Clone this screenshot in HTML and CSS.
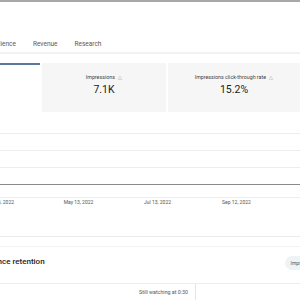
FILE: index.html
```html
<!DOCTYPE html>
<html lang="en">
<head>
    <meta charset="UTF-8">
    <title>Channel analytics</title>
    <link rel="stylesheet" href="styles.css">
</head>
<body>
    <!-- Barre du haut -->
    <div class="topbar"></div>

    <!-- Onglets -->
    <div class="tabs">
        <span class="tab">Audience</span>
        <span class="tab">Revenue</span>
        <span class="tab">Research</span>
    </div>

    <!-- Cartes de stats -->
    <div class="cards">
        <div class="card card-active"></div>
        <div class="card">
            <div class="card-label">Impressions <span class="warn">&#9651;</span></div>
            <div class="card-value">7.1K</div>
        </div>
        <div class="card">
            <div class="card-label">Impressions click-through rate <span class="warn">&#9651;</span></div>
            <div class="card-value">15.2%</div>
        </div>
    </div>

    <!-- Graphique -->
    <div class="chart">
        <div class="grid"></div>
        <div class="grid"></div>
        <div class="grid"></div>
        <div class="grid grid-line"></div>
        <div class="grid grid-last"></div>
    </div>
    <div class="dates">
        <span class="date">Mar 14, 2022</span>
        <span class="date">May 13, 2022</span>
        <span class="date">Jul 13, 2022</span>
        <span class="date">Sep 12, 2022</span>
    </div>

    <div class="sep"></div>

    <!-- Retention -->
    <div class="section">
        <div class="section-head">
            <span class="section-title">Audience retention</span>
            <span class="pill">Impressions</span>
        </div>
        <div class="retention">
            <div class="still">Still watching at 0:30</div>
        </div>
    </div>
</body>
</html>
```

FILE: styles.css
```css
/* General */
body {
    margin: 0;
    font-family: Roboto, "Liberation Sans", sans-serif;
    background-color: #FFFFFF;
    color: #606060;
    width: 300px;
    overflow: hidden;
}

/* Barre du haut */
.topbar {
    height: 35px;
    border-top: 2px solid #A8A8A8;
    box-sizing: border-box;
}

/* Onglets */
.tabs {
    display: flex;
    gap: 17px;
    height: 17px;
    align-items: center;
    margin-left: -11px;
    border-bottom: 2px solid #F2F2F2;
    font-size: 6.5px;
    color: #5A5A5A;
}

/* Cartes */
.cards {
    display: flex;
    gap: 2px;
    margin-top: 9px;
    height: 49px;
}

.card {
    background-color: #F6F6F6;
    text-align: center;
    flex: 0 0 124px;
}

.card:last-child {
    flex: 1;
}

.card-active {
    flex: 0 0 40px;
    background-color: #FFFFFF;
    border-top: 2px solid #5B7A99;
}

.card-label {
    margin-top: 11px;
    font-size: 5.3px;
    color: #444444;
}

.warn {
    font-size: 5px;
    color: #888888;
    margin-left: 2px;
}

.card-value {
    margin-top: 3px;
    font-size: 10.5px;
    color: #222222;
}

/* Graphique */
.chart {
    margin-top: 21px;
}

.grid {
    height: 16px;
    border-top: 1px solid #EDEDED;
}

.grid-line {
    height: 12px;
    border-top: 1px solid #8A8A8A;
}

.grid-last {
    height: 0;
}

.dates {
    display: flex;
    margin-top: 1px;
    margin-left: -40px;
    font-size: 5px;
    color: #555555;
}

.date {
    flex: 0 0 79px;
    text-align: center;
}

.sep {
    margin-top: 31px;
    border-top: 1px solid #EBEBEB;
}

/* Section retention */
.section {
    margin-top: 9px;
    border-top: 1px solid #F2F2F2;
}

.section-head {
    display: flex;
    justify-content: space-between;
    align-items: flex-start;
    height: 37px;
    box-sizing: border-box;
    padding-top: 10px;
    margin-left: -23px;
    border-bottom: 1px solid #EDEDED;
}

.section-title {
    font-size: 8px;
    font-weight: 500;
    color: #222222;
}

.pill {
    background-color: #EEF3F8;
    border-radius: 8px;
    padding: 4px 6px;
    margin-top: -1px;
    font-size: 5px;
    color: #555555;
    margin-right: -24px;
}

.retention {
    height: 20px;
}

.still {
    width: 196px;
    box-sizing: border-box;
    height: 20px;
    border-right: 1px solid #E5E5E5;
    text-align: right;
    padding-right: 7px;
    padding-top: 5px;
    font-size: 5.3px;
    color: #555555;
}
```
